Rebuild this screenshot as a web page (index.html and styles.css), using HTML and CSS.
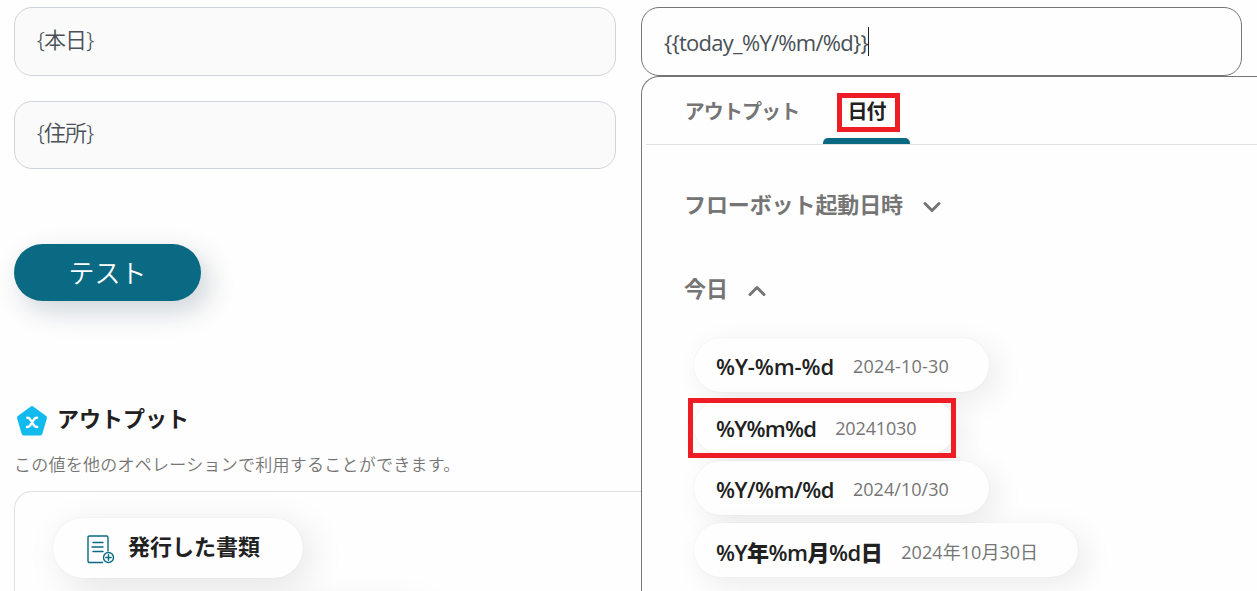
FILE: index.html
```html
<!DOCTYPE html>
<html lang="ja">
<head>
    <meta charset="UTF-8">
    <meta name="viewport" content="width=device-width, initial-scale=1.0">
    <title>アウトプット</title>
    <link rel="stylesheet" href="styles.css">
</head>
<body>
    <div class="fields">
        <div class="field-names">
            <div class="field"><span class="field-text">{本日}</span></div>
            <div class="field"><span class="field-text">{住所}</span></div>
        </div>
        <div class="field-values">
            <div class="field active"><span class="value-text">{{today_%Y/%m/%d}}</span><span class="caret"></span></div>

            <!-- Value picker -->
            <div class="picker">
                <div class="tabs">
                    <div class="tab"><span>アウトプット</span></div>
                    <div class="tab selected"><span>日付</span></div>
                </div>
                <div class="group">
                    <span>フローボット起動日時</span>
                    <svg class="chevron" viewBox="0 0 18 12"><path d="M2 2.5L9 9.5L16 2.5"/></svg>
                </div>
                <div class="group">
                    <span>今日</span>
                    <svg class="chevron" viewBox="0 0 18 12"><path d="M2 9.5L9 2.5L16 9.5"/></svg>
                </div>
                <div class="chips">
                    <div class="chip dashed"><span class="format">%Y-%m-%d</span><span class="sample">2024-10-30</span></div>
                    <div class="chip marked"><span class="format">%Y%m%d</span><span class="sample">20241030</span></div>
                    <div class="chip"><span class="format">%Y/%m/%d</span><span class="sample">2024/10/30</span></div>
                    <div class="chip"><span class="format">%Y<b>年</b>%m<b>月</b>%d<b>日</b></span><span class="sample">2024年10月30日</span></div>
                </div>
            </div>
        </div>
    </div>

    <button class="test-button"><span>テスト</span></button>

    <div class="output-title">
        <svg class="output-icon" viewBox="0 0 32 32">
            <path class="pentagon" d="M16 3L29 12.6L24.4 28.4H7.6L3 12.6Z"/>
            <path class="x-mark" d="M11.3 12.8Q13.4 12.8 14.4 14.6L17.8 20.2Q18.8 22 21.2 22M21 12.8Q18.9 12.8 17.8 14.6L14.4 20.2Q13.3 22 11 22"/>
        </svg>
        <h2>アウトプット</h2>
    </div>
    <p class="output-help">この値を他のオペレーションで利用することができます。</p>
    <div class="output-panel">
        <div class="output-item">
            <svg class="doc-icon" viewBox="0 0 28 30">
                <path d="M15.5 27.5H2.4Q1 27.5 1 26.1V2.4Q1 1 2.4 1H19.6Q21 1 21 2.4V16"/>
                <path d="M6 7.5H16M5 12H16M6 16.5H16"/>
                <circle cx="21.5" cy="22.5" r="5"/>
                <path d="M21.5 19.8V25.2M18.8 22.5H24.2"/>
            </svg>
            <span>発行した書類</span>
        </div>
        <div class="output-item wide"></div>
    </div>
</body>
</html>
```
FILE: styles.css
```css
*,
*::after {
    box-sizing: border-box;
}

html {
    overflow: hidden;
}

body {
    margin: 0;
    padding: 7px 0 0 14px;
    height: 591px;
    overflow: hidden;
    background-color: #fefefe;
    color: #212121;
    font-family: "Noto Sans", "Noto Sans CJK JP", sans-serif;
}

span,
h2,
p {
    white-space: nowrap;
}

.fields {
    display: grid;
    grid-template-columns: 602px 601px;
    column-gap: 25px;
}

.field-names {
    display: flex;
    flex-direction: column;
    gap: 25px;
}

.field-values {
    position: relative;
}

.field {
    display: flex;
    align-items: center;
    height: 69px;
    padding: 0 22px 8px;
    border: 1px solid #cfd4dc;
    border-radius: 18px;
    background-color: #fafafa;
    color: #495057;
    font-size: 22px;
}

.field + .field {
    height: 68px;
}

.field.active {
    padding: 1px 22px 0;
    border-color: #757575;
    background-color: #fefefe;
}

.field-text {
    font-weight: 350;
    letter-spacing: -0.9px;
}

.value-text {
    font-family: "Open Sans", sans-serif;
    letter-spacing: -0.74px;
}

.caret {
    width: 1px;
    height: 29px;
    margin-bottom: 2px;
    background-color: #212121;
}

/* Value picker */
.picker {
    position: absolute;
    top: 69px;
    left: 0;
    z-index: 10;
    width: 616px;
    height: 515px;
    padding-left: 4px;
    border: 1px solid #757575;
    border-width: 1px 0 0 1px;
    border-radius: 18px 0 0 0;
    background-color: #fefefe;
}

.tabs {
    display: flex;
    height: 68px;
    padding-left: 15px;
    border-bottom: 1px solid #e0e0e0;
}

.tab {
    position: relative;
    display: flex;
    justify-content: center;
    width: 162px;
    padding-top: 20px;
    color: #757575;
    font-size: 20px;
    font-weight: 700;
    letter-spacing: -0.9px;
    line-height: 30px;
}

.tab.selected {
    width: 87px;
    color: #212121;
}

.tab.selected::before {
    content: "";
    position: absolute;
    bottom: 0;
    left: 0;
    width: 87px;
    height: 6px;
    border-radius: 5px 5px 0 0;
    background-color: #0b6a83;
}

.tab.selected::after {
    content: "";
    position: absolute;
    top: 16px;
    left: 14px;
    width: 63px;
    height: 39px;
    border: 5px solid #ee1c24;
}

.group {
    display: flex;
    align-items: center;
    gap: 20px;
    height: 34px;
    margin: 41px 0 0 38px;
    color: #757575;
    font-size: 22px;
    font-weight: 700;
    letter-spacing: -0.1px;
}

.group + .group {
    margin-top: 50px;
}

.chevron {
    width: 18px;
    height: 12px;
    margin-top: 7px;
    fill: none;
    stroke: #757575;
    stroke-width: 3;
    stroke-linecap: round;
    stroke-linejoin: round;
}

.chips {
    display: flex;
    flex-direction: column;
    align-items: flex-start;
    gap: 7.7px;
    margin: 34px 0 0 48px;
}

.chip {
    position: relative;
    display: flex;
    align-items: center;
    gap: 19px;
    height: 54px;
    padding: 2px 40px 0 22px;
    border-radius: 27px;
    background-color: #fefefe;
    box-shadow: 8px 8px 30px rgba(0, 0, 0, 0.08), 0 0 2px rgba(0, 0, 0, 0.06);
}

.chip.marked::after {
    content: "";
    position: absolute;
    top: -2px;
    left: -6px;
    z-index: 1;
    width: 268px;
    height: 60px;
    border: 5px solid #ee1c24;
}

.format {
    font-family: "Open Sans", "Noto Sans CJK JP", sans-serif;
    font-size: 22px;
    font-weight: 600;
    letter-spacing: -0.5px;
}

.dashed .format {
    letter-spacing: -0.1px;
}

.marked .format {
    letter-spacing: -0.75px;
}

.sample {
    color: #757575;
    font-family: "Open Sans", "Noto Sans CJK JP", sans-serif;
    font-size: 18px;
    letter-spacing: 0.05px;
}

.dashed .sample {
    letter-spacing: 0.2px;
}

.marked .sample {
    letter-spacing: -0.15px;
}

/* Left column */
.test-button {
    display: flex;
    align-items: center;
    justify-content: center;
    width: 187px;
    height: 57px;
    margin-top: 75px;
    padding: 0 0 3px;
    border: none;
    border-radius: 28.5px;
    background-color: #0b6a83;
    box-shadow: 8px 10px 28px rgba(11, 40, 60, 0.2);
    color: #fff;
    font-family: "Noto Sans CJK JP", sans-serif;
    font-size: 26px;
    font-weight: 350;
}

.output-title {
    display: flex;
    align-items: center;
    gap: 9px;
    height: 36px;
    margin: 101px 0 0 2px;
}

.output-title h2 {
    margin: 0 0 6px;
    font-size: 22px;
    font-weight: 700;
}

.output-icon {
    width: 32px;
    height: 32px;
    margin-top: 2px;
}

.pentagon {
    fill: #12bbed;
    stroke: #12bbed;
    stroke-width: 4;
    stroke-linejoin: round;
}

.x-mark {
    fill: none;
    stroke: #fff;
    stroke-width: 2.4;
    stroke-linecap: round;
}

.output-help {
    height: 24px;
    margin: 14px 0 0;
    color: #757575;
    font-size: 17px;
    font-weight: 350;
    letter-spacing: 0.25px;
    line-height: 25px;
}

.output-panel {
    display: flex;
    flex-direction: column;
    align-items: flex-start;
    gap: 22px;
    height: 100px;
    margin-top: 15px;
    padding: 26px 38px 0;
    overflow: hidden;
    border: 1px solid #e0e0e0;
    border-width: 1px 0 0 1px;
    border-radius: 18px 0 0 0;
}

.output-item {
    display: flex;
    align-items: center;
    gap: 13px;
    width: 250px;
    height: 60px;
    flex-shrink: 0;
    padding-left: 34px;
    border-radius: 30px;
    background-color: #fefefe;
    box-shadow: 8px 8px 36px rgba(0, 0, 0, 0.1), 0 0 2px rgba(0, 0, 0, 0.06);
    font-size: 22px;
    font-weight: 700;
}

.output-item span {
    margin-bottom: 7px;
}

.output-item.wide {
    width: 372px;
}

.doc-icon {
    width: 28px;
    height: 30px;
    margin-top: 3px;
    fill: none;
    stroke: #0b6a83;
    stroke-width: 1.4;
    stroke-linecap: round;
}
```
